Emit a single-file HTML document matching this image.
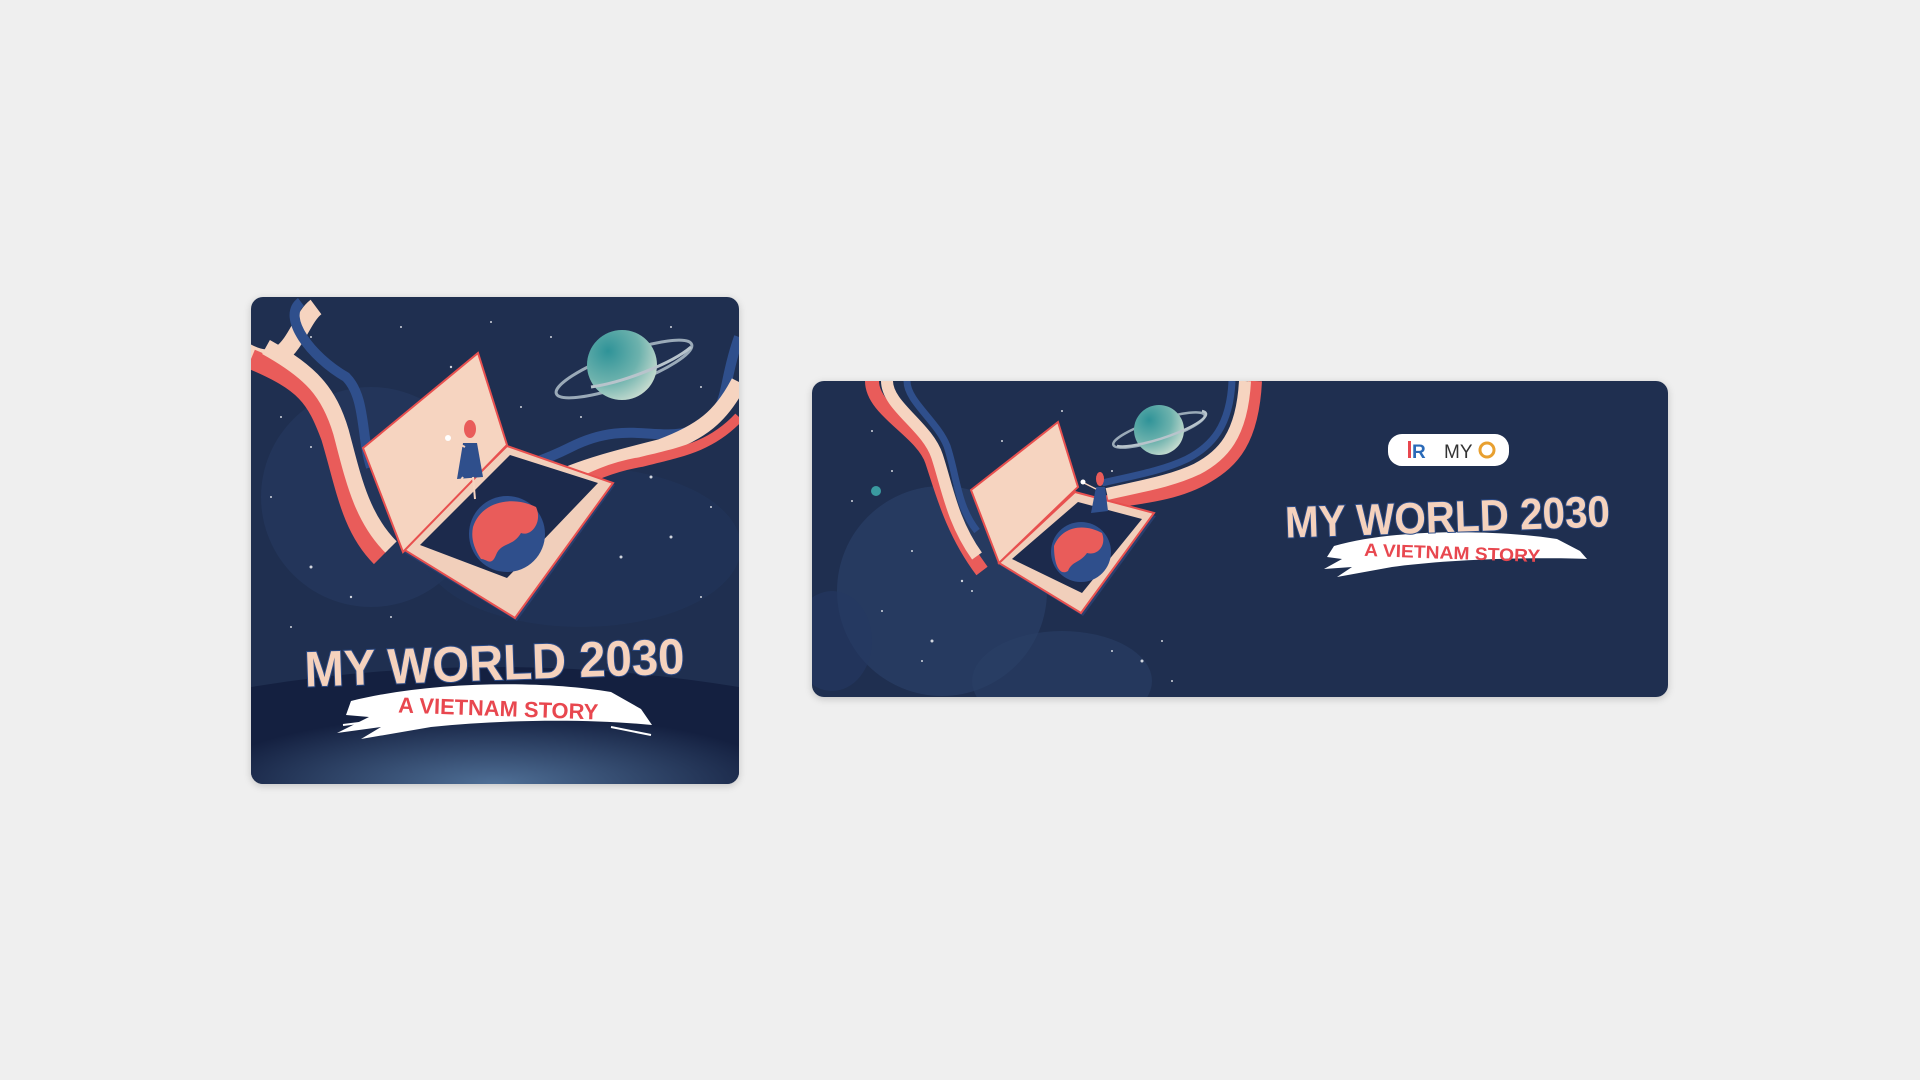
<!DOCTYPE html>
<html><head><meta charset="utf-8"><style>
html,body{margin:0;padding:0;background:#efefef;width:1920px;height:1080px;overflow:hidden}
.card{position:absolute;border-radius:12px;overflow:hidden;background:#1f2f50;box-shadow:0 2px 8px rgba(0,0,0,.18)}
svg{display:block}
</style></head><body>
<div class="card" style="left:251px;top:297px;width:488px;height:487px">
<svg width="488" height="487" viewBox="0 0 488 487">
<defs>
<radialGradient id="pl" cx="0.3" cy="0.3" r="0.9"><stop offset="0" stop-color="#2f9398"/><stop offset="0.5" stop-color="#6db2ad"/><stop offset="1" stop-color="#e6eadc"/></radialGradient>
<radialGradient id="hz" cx="0.5" cy="1" r="0.6"><stop offset="0" stop-color="#4f6f96"/><stop offset="1" stop-color="#142040"/></radialGradient>
</defs>
<circle cx="120" cy="200" r="110" fill="#263a60" opacity="0.6"/>
<ellipse cx="330" cy="250" rx="160" ry="80" fill="#22355a" opacity="0.6"/>
<g fill="#fff" opacity="0.8">
<circle cx="60" cy="40" r="1"/><circle cx="150" cy="30" r="1"/><circle cx="200" cy="70" r="1.2"/><circle cx="240" cy="25" r="1"/><circle cx="300" cy="40" r="1"/><circle cx="420" cy="30" r="1"/><circle cx="450" cy="90" r="1"/><circle cx="30" cy="120" r="1"/><circle cx="60" cy="150" r="1"/><circle cx="20" cy="200" r="1"/><circle cx="400" cy="180" r="1.5"/><circle cx="420" cy="240" r="1.5"/><circle cx="460" cy="210" r="1"/><circle cx="370" cy="260" r="1.5"/><circle cx="60" cy="270" r="1.5"/><circle cx="100" cy="300" r="1.2"/><circle cx="450" cy="300" r="1"/><circle cx="140" cy="320" r="1"/><circle cx="330" cy="120" r="1"/><circle cx="350" cy="140" r="1.5"/><circle cx="270" cy="110" r="1"/><circle cx="470" cy="460" r="1.5"/><circle cx="40" cy="330" r="1"/><circle cx="420" cy="150" r="1"/>
</g>
<path d="M-5 55 C40 80,45 25,65 10" stroke="#f6d4c0" stroke-width="18" fill="none"/>
<path d="M0 62 C55 85,65 100,80 140 C95 190,100 230,130 260" stroke="#e95c5a" stroke-width="20" fill="none"/>
<path d="M15 50 C60 75,78 95,90 135 C102 180,110 220,140 250" stroke="#f6d4c0" stroke-width="16" fill="none"/>
<path d="M50 5 C30 20,60 60,95 80 C115 100,110 140,120 170" stroke="#2f4f8c" stroke-width="10" fill="none"/>
<path d="M488 40 C470 90,480 110,450 130 C410 150,380 120,320 150 C290 165,270 170,250 175" stroke="#2f4f8c" stroke-width="10" fill="none"/>
<path d="M488 85 C470 120,450 135,410 150 C370 160,330 170,300 185" stroke="#f6d4c0" stroke-width="16" fill="none"/>
<path d="M488 120 C460 150,430 155,390 165 C360 170,340 180,320 190" stroke="#e95c5a" stroke-width="10" fill="none"/>
<ellipse cx="373" cy="72" rx="72" ry="16" transform="rotate(-20 373 72)" fill="none" stroke="#9aaab8" stroke-width="3"/>
<circle cx="371" cy="68" r="35" fill="url(#pl)"/>
<path d="M340 90 A70 16 -20 0 0 440 50" fill="none" stroke="#b8c4cc" stroke-width="3"/>
<polygon points="152,255 256,151 364,188 266,324" fill="#2a3f6e"/>
<polygon points="152,252 256,149 362,186 264,321" fill="#f1cfbb" stroke="#e8504f" stroke-width="2"/>
<polygon points="169,248 259,158 347,186 256,281" fill="#1c2a4c"/>
<circle cx="256" cy="237" r="38" fill="#2f4f8c"/>
<path d="M222 230 C230 205,260 198,285 210 C292 225,280 240,270 236 C262 250,250 245,245 258 C240 270,236 262,230 262 C222 250,220 240,222 230Z" fill="#e95c5a"/>
<polygon points="112,151 227,56 256,148 152,255" fill="#f6d4c0" stroke="#e8504f" stroke-width="2"/>
<ellipse cx="219" cy="132" rx="6" ry="9" fill="#e95c5a"/>
<path d="M212 146 L226 146 L232 180 L206 182Z" fill="#2f4f8c"/>
<line x1="212" y1="180" x2="200" y2="198" stroke="#f6d4c0" stroke-width="2"/>
<line x1="222" y1="180" x2="224" y2="202" stroke="#f6d4c0" stroke-width="2"/>
<line x1="214" y1="150" x2="198" y2="142" stroke="#f6d4c0" stroke-width="2"/>
<circle cx="197" cy="141" r="3" fill="#fff"/>
<path d="M0 390 Q244 350 488 390 L488 487 L0 487Z" fill="url(#hz)"/>
<g fill="#fff">
<path d="M100 404 C180 384,290 383,360 395 L390 412 L401 428 C340 422,260 422,180 430 L110 442 L130 430 L86 436 L118 420 L95 418Z"/>
<path d="M92 428 L140 422" stroke="#fff" stroke-width="2"/>
<path d="M360 430 L400 438" stroke="#fff" stroke-width="2"/>
</g>
<text x="244" y="383" text-anchor="middle" font-family="Liberation Sans, sans-serif" font-weight="bold" font-size="50" fill="#f5d2bd" stroke="#2a4a86" stroke-width="2" paint-order="stroke" textLength="380" lengthAdjust="spacingAndGlyphs" transform="rotate(-2 244 383)">MY WORLD 2030</text>
<text x="247" y="419" text-anchor="middle" font-family="Liberation Sans, sans-serif" font-weight="bold" font-size="22" fill="#e8474f" textLength="200" lengthAdjust="spacingAndGlyphs" transform="rotate(2 247 419)">A VIETNAM STORY</text>
</svg></div>

<div class="card" style="left:812px;top:381px;width:856px;height:316px">
<svg width="856" height="316" viewBox="0 0 856 316">
<defs>
<radialGradient id="pl2" cx="0.3" cy="0.3" r="0.9"><stop offset="0" stop-color="#2f9398"/><stop offset="0.5" stop-color="#6db2ad"/><stop offset="1" stop-color="#e6eadc"/></radialGradient>
</defs>
<circle cx="130" cy="210" r="105" fill="#2a3f66" opacity="0.7"/>
<ellipse cx="250" cy="300" rx="90" ry="50" fill="#2a3f66" opacity="0.6"/>
<ellipse cx="20" cy="260" rx="40" ry="50" fill="#253962" opacity="0.6"/>
<g fill="#fff" opacity="0.8">
<circle cx="60" cy="50" r="1"/><circle cx="80" cy="90" r="1"/><circle cx="40" cy="120" r="1"/><circle cx="100" cy="170" r="1"/><circle cx="150" cy="200" r="1.2"/><circle cx="70" cy="230" r="1"/><circle cx="120" cy="260" r="1.5"/><circle cx="160" cy="210" r="1"/><circle cx="330" cy="280" r="1.5"/><circle cx="360" cy="300" r="1"/><circle cx="300" cy="270" r="1"/><circle cx="190" cy="60" r="1"/><circle cx="250" cy="30" r="1"/><circle cx="300" cy="90" r="1"/><circle cx="400" cy="60" r="1"/><circle cx="210" cy="140" r="1"/><circle cx="110" cy="280" r="1"/><circle cx="350" cy="260" r="1"/>
</g>
<circle cx="64" cy="110" r="5" fill="#3a9aa0"/>
<path d="M60 0 C60 30,110 50,120 80 C130 110,140 150,170 190" stroke="#e95c5a" stroke-width="14" fill="none"/>
<path d="M75 0 C75 25,115 45,125 75 C135 105,140 140,165 175" stroke="#f6d4c0" stroke-width="12" fill="none"/>
<path d="M95 0 C95 20,125 40,135 65 C145 95,145 125,165 150" stroke="#2f4f8c" stroke-width="7" fill="none"/>
<path d="M443 0 C440 60,420 80,395 95 C370 110,340 115,300 120 C280 125,265 130,250 135" stroke="#e95c5a" stroke-width="14" fill="none"/>
<path d="M433 0 C430 55,410 75,385 88 C360 100,330 105,295 113" stroke="#f6d4c0" stroke-width="12" fill="none"/>
<path d="M420 0 C418 45,400 65,375 78 C350 90,320 95,290 102" stroke="#2f4f8c" stroke-width="7" fill="none"/>
<ellipse cx="347" cy="49" rx="48" ry="10" transform="rotate(-18 347 49)" fill="none" stroke="#9aaab8" stroke-width="2.5"/>
<circle cx="347" cy="49" r="25" fill="url(#pl2)"/>
<path d="M305 65 A48 10 -18 0 0 390 30" fill="none" stroke="#b8c4cc" stroke-width="2.5"/>
<polygon points="187,184 263,113 344,135 271,235" fill="#2a3f6e"/>
<polygon points="187,182 263,111 342,132 269,232" fill="#f1cfbb" stroke="#e8504f" stroke-width="2"/>
<polygon points="200,178 266,121 330,138 270,212" fill="#1c2a4c"/>
<circle cx="269" cy="171" r="30" fill="#2f4f8c"/>
<path d="M242 165 C250 145,272 142,290 152 C295 165,285 175,275 172 C268 182,260 180,256 190 C248 195,242 185,242 165Z" fill="#e95c5a"/>
<polygon points="159,109 246,41 266,106 187,182" fill="#f6d4c0" stroke="#e8504f" stroke-width="2"/>
<ellipse cx="288" cy="98" rx="4" ry="7" fill="#e95c5a"/>
<path d="M284 106 L293 106 L296 130 L279 132Z" fill="#2f4f8c"/>
<line x1="284" y1="108" x2="272" y2="102" stroke="#f6d4c0" stroke-width="1.5"/>
<circle cx="271" cy="101" r="2.5" fill="#fff"/>
<rect x="576" y="53" width="121" height="32" rx="14" fill="#fff"/>
<rect x="596" y="60" width="3" height="17" fill="#e8474f"/>
<text x="600" y="77" font-family="Liberation Sans, sans-serif" font-weight="bold" font-size="19" fill="#2a6ab8">R</text>
<text x="632" y="77" font-family="Liberation Sans, sans-serif" font-size="19" fill="#333">MY</text>
<circle cx="675" cy="69" r="7" fill="none" stroke="#e8a030" stroke-width="3"/>
<path d="M522 165 C580 148,680 148,745 158 L768 170 L775 178 C720 176,640 178,580 186 L525 196 L540 186 L512 188 L530 178 L515 176Z" fill="#fff"/>
<text x="636" y="151" text-anchor="middle" font-family="Liberation Sans, sans-serif" font-weight="bold" font-size="44" fill="#f5d2bd" stroke="#2a4a86" stroke-width="2" paint-order="stroke" textLength="325" lengthAdjust="spacingAndGlyphs" transform="rotate(-2 636 151)">MY WORLD 2030</text>
<text x="640" y="178" text-anchor="middle" font-family="Liberation Sans, sans-serif" font-weight="bold" font-size="18" fill="#e8474f" textLength="176" lengthAdjust="spacingAndGlyphs" transform="rotate(2 640 178)">A VIETNAM STORY</text>
</svg></div>
</body></html>
